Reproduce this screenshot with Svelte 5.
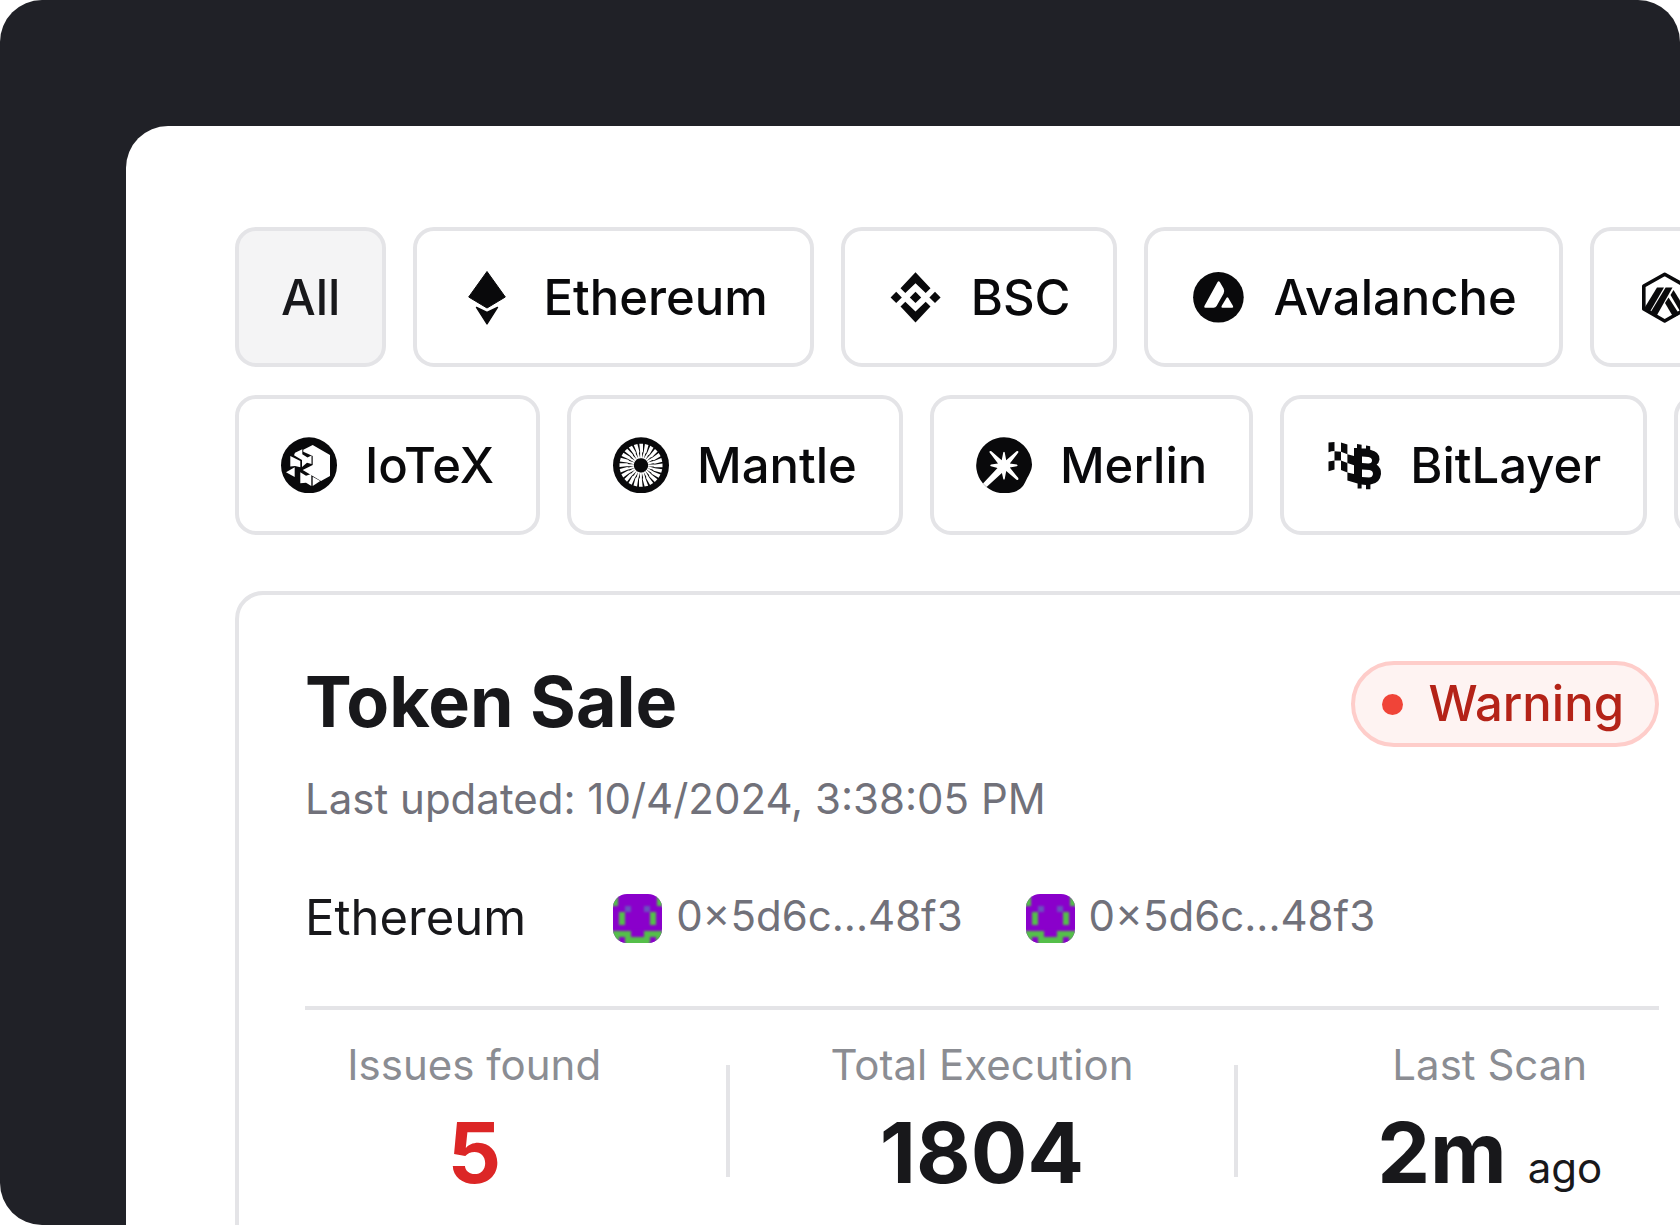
<script>
  const rays = Array.from({ length: 24 }, (_, i) => i * 15);

  const rows = [
    [
      { name: 'All', icon: null },
      { name: 'Ethereum', icon: 'ethereum' },
      { name: 'BSC', icon: 'bsc' },
      { name: 'Avalanche', icon: 'avalanche' },
      { name: 'Arbitrum', icon: 'arbitrum', bare: true }
    ],
    [
      { name: 'IoTeX', icon: 'iotex' },
      { name: 'Mantle', icon: 'mantle' },
      { name: 'Merlin', icon: 'merlin' },
      { name: 'BitLayer', icon: 'bitlayer' },
      { name: 'More networks', icon: null, bare: true }
    ]
  ];

  const addresses = ['0×5d6c...48f3', '0×5d6c...48f3'];

  let selected = $state('All');
</script>

{#snippet chainIcon(kind)}
  <svg class="icon" viewBox="0 0 56 56" aria-hidden="true">
    {#if kind === 'ethereum'}
      <path d="M28 2.5 46.3 28 28 39 9.7 28Z" stroke-width="1" stroke="currentColor" stroke-linejoin="round" />
      <path d="M17.5 38.4 28 43.5 38.5 38.4 28 55Z" stroke-width="1.4" stroke="currentColor" stroke-linejoin="round" />
    {:else if kind === 'bsc'}
      <path d="M28.5 3.3 43.5 19.2 38.7 24 28.5 14.3 18.3 24 13.5 19.2Z" />
      <path d="M28.5 53.5 43.5 37.6 38.7 32.8 28.5 42.5 18.3 32.8 13.5 37.6Z" />
      <path d="M28.5 22.7 34.2 28.4 28.5 34.1 22.8 28.4Z" />
      <path d="M9.2 22.8 14.8 28.4 9.2 34 3.6 28.4Z" />
      <path d="M48 22.8 53.6 28.4 48 34 42.4 28.4Z" />
    {:else if kind === 'avalanche'}
      <circle cx="28.4" cy="28.3" r="25.3" />
      <path class="cut" d="M27.6 12.9Q28.7 11.5 29.8 12.9L33.6 19.5Q34.8 22 33.6 24.6L26.6 37Q25.6 38.8 23.6 38.8H15.2Q13.6 38.6 14.4 37Z" />
      <path class="cut" d="M36.6 28.8Q37.4 27.6 38.2 28.8L43 37Q43.8 38.6 42.2 38.8H32.4Q30.8 38.6 31.6 37Z" />
    {:else if kind === 'arbitrum'}
      <path class="line" stroke-width="3.6" stroke-linejoin="round" d="M28.7 5.2 49.6 17V40L28.7 52 7.8 40V17Z" />
      <path d="M21 18.5H28L13.5 43.5 7.5 40.5Z" />
      <path d="M29.6 18.500H36.5L20.5 47 14.5 43.5Z" />
      <path d="M37.5 21 50 41 45 44 34.5 26Z" />
      <path d="M32.5 28.500 43.5 45.5 37.5 48.5 29 34Z" />
    {:else if kind === 'iotex'}
      <circle cx="28" cy="28.3" r="28" />
      <path class="cut" d="M31.7 8 49 18V39L40 44 21.7 33 31.7 28V19L22.3 14.7V12.7Z" />
      <path class="cut" d="M14 15.7 21.3 12.3V17.3L26.5 20.5 30.5 18.6V27L26 25.7 21 30V23L19.7 22.3 13 18.2Z" />
      <path class="cut" d="M9.3 19 19.3 24V30.3L14 29 9.3 29.5Z" />
      <path class="cut" d="M5 35.3 13.7 30.3V40Z" />
      <path class="cut" d="M19.3 35.3 25 38.7 30.3 37V49L25 45.7 19.3 46.2Z" />
      <path class="cut" d="M31.7 39.7 39.3 44 31.7 49Z" />
    {:else if kind === 'mantle'}
      <circle cx="28" cy="28.3" r="28" />
      {#each rays as angle}
        <path class="cut" transform={`rotate(${angle} 28 28.3)`} d="M26.3 6.8H30V14.5L29.1 16V21.2H27.1V14Z" />
      {/each}
    {:else if kind === 'merlin'}
      <path d="M28 .3A28 28 0 0 1 56 27.5C56 34 52 39 49 45.5 47 50 42 56.3 28 56.3A28 28 0 0 1 10.5 50L7 46.6A28 28 0 0 1 28 .3Z" />
      <path class="cut" d="M27.3 15.3Q28 14 28.7 15.3L30.2 23.2 40.5 14.3Q42.9 13.6 42.3 15.6L33.8 26.4 40.8 27.6Q42.3 28.4 40.8 29.2L33.8 30.5 42.3 41Q42.9 43.6 40.5 42.7L30.2 34 28.7 42Q28 43.3 27.3 42L25.9 36 10.6 50 7 46.6 21.5 31 15 29.2Q13.5 28.4 15 27.6L22 26.4 13.6 15.6Q13 13.4 15.4 14.2L25.7 23.2Z" />
    {:else}
      <path d="M2.5 5.6Q5.5 5 8.5 5V14Q5.5 14 2.5 15.2ZM15 5.6 21.4 7.6V17.2L15 14.8ZM8.5 14.2 15 14.8V23.6L8.5 23.4ZM2.5 24.6 8.5 23.4V32.6L2.5 34.2ZM15 23.6 21.4 26V35.4L15 33ZM21.4 17.2 28 19V28.2L21.4 26ZM21.4 35.4 28 37V11H31V7L35.6 7.8V11.6H40V8.4L44.2 9.2V12.8Q54 15 53.5 22.5 53 26 50.6 27.5 55.4 31 55 37 54 46.5 44.4 47.5V52.2H40V48L35.6 47.6V51.6H31.6V46.6L21.4 43.6Z" />
      <path class="cut" d="M36 19.5 42.4 20Q46 20.6 46 23.4 46 26.4 42.4 26.4L36 26ZM36 32.5 43.4 33Q47 33.6 47 37 46.4 40.6 43 40.6L36 40Z" />
    {/if}
  </svg>
{/snippet}

{#snippet avatar()}
  <svg class="avatar" viewBox="0 0 49 49" aria-hidden="true">
    <rect class="violet" width="49" height="49" />
    <g class="pixels">
      <path class="green" d="M-6 -6H5V12H-6ZM44 -6H55V12H44ZM6 18H12V31H6ZM37 18H43V31H37ZM-6 37H55V55H-6Z" />
      <path class="violet" d="M18 36H31V43H18ZM6 43H12V55H6ZM37 43H43V55H37Z" />
      <path class="blue" d="M12 12H18V18H12ZM31 12H37V18H31Z" />
    </g>
  </svg>
{/snippet}

<main class="stage">
  <div class="panel">
    <nav class="chains" aria-label="Networks">
      {#each rows as row}
        <div class="row">
          {#each row as chain}
            <button
              type="button"
              class="chip"
              class:bare={chain.bare}
              class:active={selected === chain.name}
              aria-pressed={selected === chain.name}
              aria-label={chain.name}
              onclick={() => (selected = chain.name)}
            >
              {#if chain.icon}{@render chainIcon(chain.icon)}{/if}
              {#if !chain.bare}<span class="name">{chain.name}</span>{/if}
            </button>
          {/each}
        </div>
      {/each}
    </nav>

    <article class="card">
      <header class="head">
        <h1>Token Sale</h1>
        <span class="badge"><i class="dot"></i>Warning</span>
      </header>
      <p class="updated">Last updated: 10/4/2024, 3:38:05 PM</p>
      <div class="meta">
        <span class="network">Ethereum</span>
        {#each addresses as address}
          <span class="address">{@render avatar()}<span class="hash">{address}</span></span>
        {/each}
      </div>
      <div class="stats">
        <div class="stat">
          <span class="label">Issues found</span>
          <strong class="value red">5</strong>
        </div>
        <div class="rule"></div>
        <div class="stat">
          <span class="label">Total Execution</span>
          <strong class="value">1804</strong>
        </div>
        <div class="rule"></div>
        <div class="stat">
          <span class="label">Last Scan</span>
          <span class="pair"><strong class="value">2m</strong><span class="unit">ago</span></span>
        </div>
      </div>
    </article>
  </div>
</main>

<style>
  :global(body) {
    background: #fff;
  }

  .stage {
    box-sizing: border-box;
    height: 100vh;
    padding: 126px 0 0 126px;
    display: flex;
    border-radius: 42px;
    border-bottom-right-radius: 0;
    overflow: hidden;
    background: #202127;
    font-family: Inter, 'Liberation Sans', sans-serif;
    color: #18181b;
  }

  .panel {
    box-sizing: border-box;
    flex: 1;
    min-width: 0;
    padding: 101px 0 0 109px;
    border-top-left-radius: 42px;
    background: #fff;
    overflow: hidden;
  }

  .chains {
    display: grid;
    gap: 28px;
  }

  .row {
    display: flex;
    gap: 27px;
  }

  .chip {
    flex: none;
    box-sizing: border-box;
    height: 140px;
    display: flex;
    align-items: center;
    gap: 28px;
    padding: 0 42px;
    border: 4px solid #e4e4e7;
    border-radius: 21px;
    background: #fff;
    color: #09090b;
    font: 500 49px/70px Inter, 'Liberation Sans', sans-serif;
    cursor: pointer;
  }

  .chip.active {
    background: #f4f4f5;
    color: #18181b;
  }

  .chip.bare {
    min-width: 240px;
  }

  .name {
    padding-top: 2px;
  }

  .icon {
    flex: none;
    width: 56px;
    height: 56px;
    fill: currentColor;
  }

  .cut {
    fill: #fff;
  }

  .line {
    fill: none;
    stroke: currentColor;
  }

  .card {
    box-sizing: border-box;
    margin: 56px -49px 0 0;
    padding: 66px;
    border: 4px solid #e4e4e7;
    border-radius: 28px;
  }

  .head {
    display: flex;
    align-items: center;
    justify-content: space-between;
  }

  h1 {
    margin: 0;
    padding-bottom: 4px;
    font-size: 70px;
    line-height: 82px;
    font-weight: 700;
  }

  .badge {
    box-sizing: border-box;
    height: 86px;
    display: flex;
    align-items: center;
    gap: 25px;
    padding: 0 31px 0 27px;
    border: 4px solid #fecdca;
    border-radius: 43px;
    background: #fef3f2;
    color: #b42318;
    font-size: 49px;
    line-height: 70px;
    font-weight: 500;
  }

  .dot {
    width: 21px;
    height: 21px;
    border-radius: 50%;
    background: #f04438;
  }

  .updated {
    margin: 24px 0 0;
    color: #71717a;
    font-size: 42px;
    line-height: 56px;
  }

  .meta {
    display: flex;
    align-items: center;
    margin-top: 56px;
    font-size: 49px;
    line-height: 70px;
  }

  .network {
    margin-right: 87px;
  }

  .address {
    display: flex;
    align-items: center;
    gap: 14px;
    margin-right: 63px;
    color: #71717a;
    font-size: 42px;
    line-height: 56px;
  }

  .hash {
    padding-bottom: 4px;
  }

  .avatar {
    width: 49px;
    height: 49px;
    border-radius: 14px;
    overflow: hidden;
  }

  .pixels {
    filter: blur(1px);
  }

  .violet {
    fill: #8a00cb;
  }

  .green {
    fill: #55bf4a;
  }

  .blue {
    fill: #6a52bd;
  }

  .stats {
    display: flex;
    justify-content: space-between;
    align-items: center;
    margin-top: 53px;
    padding-top: 27px;
    border-top: 4px solid #e4e4e7;
  }

  .stat {
    flex: 0 0 25%;
    display: flex;
    flex-direction: column;
    align-items: center;
  }

  .rule {
    width: 4px;
    height: 112px;
    background: #e4e4e7;
  }

  .label {
    color: #8b8d93;
    font-size: 42px;
    line-height: 56px;
    white-space: nowrap;
  }

  .value {
    margin-top: 8px;
    font-size: 84px;
    line-height: 104px;
    font-weight: 700;
  }

  .red {
    color: #dc2626;
  }

  .pair {
    display: flex;
    align-items: baseline;
    gap: 21px;
  }

  .unit {
    font-size: 42px;
  }
</style>
